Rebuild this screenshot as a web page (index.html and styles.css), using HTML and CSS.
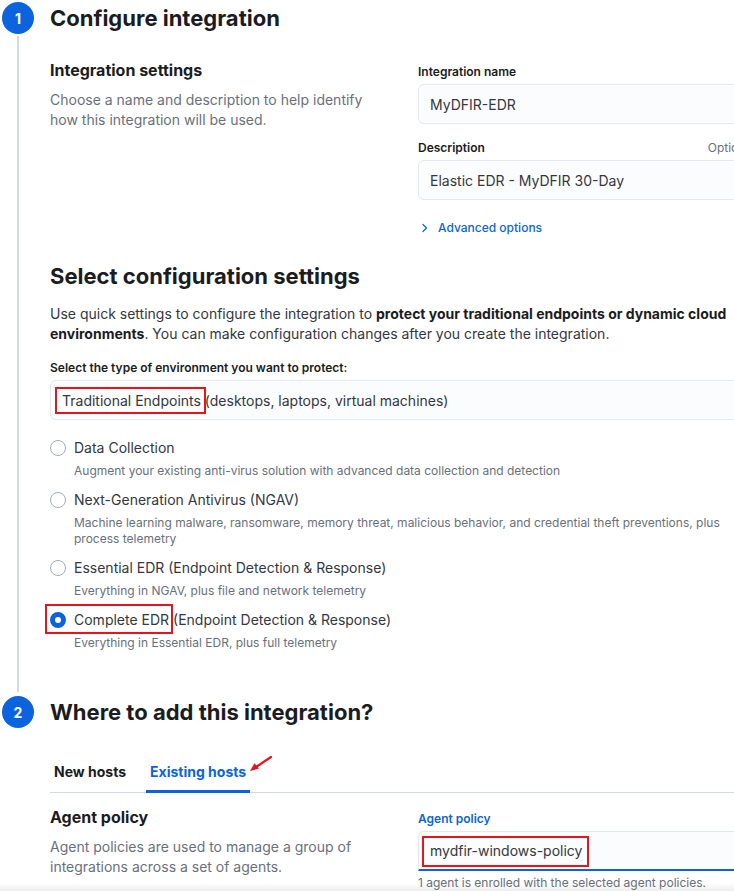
FILE: index.html
```html
<!DOCTYPE html>
<html lang="en">
<head>
<meta charset="utf-8">
<title>Configure integration</title>
<link rel="stylesheet" href="styles.css">
</head>
<body>
<div class="page">
  <section class="step step-one">
    <div class="marker"><span class="num">1</span><span class="line"></span></div>
    <div class="content">
      <h2 class="title">Configure integration</h2>
      <div class="row row-first">
        <div class="row-left">
          <h3 class="row-title">Integration settings</h3>
          <p class="desc">Choose a name and description to help identify how this integration will be used.</p>
        </div>
        <div class="row-right">
          <div class="field">
            <div class="label-row"><span class="label">Integration name</span></div>
            <div class="input">MyDFIR-EDR</div>
          </div>
          <div class="field">
            <div class="label-row"><span class="label">Description</span><span class="opt">Optional</span></div>
            <div class="input">Elastic EDR - MyDFIR 30-Day</div>
          </div>
          <div class="adv">
            <svg class="chev" width="8" height="10" viewBox="0 0 8 10"><path d="M2 1.5 L5.5 5 L2 8.5" fill="none" stroke="currentColor" stroke-width="1.3" stroke-linecap="round" stroke-linejoin="round"/></svg>
            <span>Advanced options</span>
          </div>
        </div>
      </div>

      <h2 class="title config-title">Select configuration settings</h2>
      <p class="intro">Use quick settings to configure the integration to <strong>protect your traditional endpoints or dynamic cloud environments</strong>. You can make configuration changes after you create the integration.</p>
      <div class="env-label">Select the type of environment you want to protect:</div>
      <div class="select"><span class="mark mark-env">Traditional Endpoints</span> (desktops, laptops, virtual machines)</div>

      <div class="radios">
        <div class="radio-item">
          <div class="radio-line"><span class="radio"></span><span>Data Collection</span></div>
          <div class="radio-desc">Augment your existing anti-virus solution with advanced data collection and detection</div>
        </div>
        <div class="radio-item">
          <div class="radio-line"><span class="radio"></span><span>Next-Generation Antivirus (NGAV)</span></div>
          <div class="radio-desc">Machine learning malware, ransomware, memory threat, malicious behavior, and credential theft preventions, plus process telemetry</div>
        </div>
        <div class="radio-item">
          <div class="radio-line"><span class="radio"></span><span>Essential EDR (Endpoint Detection &amp; Response)</span></div>
          <div class="radio-desc">Everything in NGAV, plus file and network telemetry</div>
        </div>
        <div class="radio-item">
          <div class="radio-line"><span class="mark mark-radio"><span class="radio radio-on"></span><span>Complete EDR</span></span><span class="rest">&nbsp;(Endpoint Detection &amp; Response)</span></div>
          <div class="radio-desc">Everything in Essential EDR, plus full telemetry</div>
        </div>
      </div>
    </div>
  </section>

  <section class="step step-two">
    <div class="marker"><span class="num">2</span></div>
    <div class="content">
      <h2 class="title">Where to add this integration?</h2>
      <div class="tabs">
        <div class="tab">New hosts</div>
        <div class="tab tab-active">Existing hosts
          <svg class="arrow" width="26" height="18" viewBox="0 0 26 18"><path d="M23 2 L8 12" stroke="#e8141b" stroke-width="2.2" stroke-linecap="round"/><path d="M2 16 L6.5 8.2 L11 13.6 Z" fill="#e8141b"/></svg>
        </div>
      </div>
      <div class="row row-agent">
        <div class="row-left">
          <h3 class="row-title">Agent policy</h3>
          <p class="desc">Agent policies are used to manage a group of integrations across a set of agents.</p>
        </div>
        <div class="row-right">
          <div class="field">
            <div class="label-row"><span class="label label-focus">Agent policy</span></div>
            <div class="input input-focus"><span class="mark mark-policy">mydfir-windows-policy</span></div>
            <div class="help">1 agent is enrolled with the selected agent policies.</div>
          </div>
        </div>
      </div>
    </div>
  </section>
</div>
<div class="bottom-shade"></div>
</body>
</html>
```

FILE: styles.css
```css
html, body {
  margin: 0;
  padding: 0;
  overflow: hidden;
  background: #ffffff;
}

body {
  font-family: Inter, "Noto Sans", "Liberation Sans", sans-serif;
  color: #343741;
  -webkit-font-smoothing: antialiased;
}

.page {
  width: 755px;
}

.step {
  display: flex;
  gap: 14px;
}

.marker {
  flex: none;
  width: 36px;
  display: flex;
  flex-direction: column;
  align-items: center;
}

.num {
  flex: none;
  width: 32px;
  height: 32px;
  margin-top: 2px;
  border-radius: 50%;
  background: #0b64dd;
  color: #ffffff;
  font-size: 14px;
  font-weight: 700;
  display: flex;
  align-items: center;
  justify-content: center;
}

.line {
  flex: 1;
  width: 2px;
  margin: 2px 0;
  background: #d3dae6;
}

.content {
  width: 705px;
}

.step-one .content {
  padding-bottom: 43px;
}

.title {
  margin: 0;
  font-size: 22px;
  line-height: 36px;
  font-weight: 700;
  color: #1a1c21;
}

.row {
  display: grid;
  grid-template-columns: 340px 337px;
  column-gap: 28px;
}

.row-first {
  margin-top: 22px;
}

.row-title {
  margin: 0;
  font-size: 16px;
  line-height: 24px;
  font-weight: 700;
  color: #1a1c21;
}

.desc {
  margin: 8px 0 0;
  font-size: 14px;
  line-height: 20px;
  color: #69707d;
}

.row-right {
  padding-top: 4px;
}

.field + .field {
  margin-top: 14px;
}

.label-row {
  display: flex;
  justify-content: space-between;
  font-size: 12px;
  line-height: 20px;
}

.label {
  font-weight: 600;
  color: #1a1c21;
}

.label-focus {
  color: #0b64dd;
}

.opt {
  color: #69707d;
}

.input {
  margin-top: 2px;
  height: 40px;
  box-sizing: border-box;
  border: 1px solid #e3e7ee;
  border-radius: 6px;
  background: #fbfcfd;
  padding: 0 11px;
  display: flex;
  align-items: center;
  font-size: 14px;
  color: #343741;
}

.input-focus {
  border-bottom: 2px solid #0b64dd;
  border-radius: 6px 6px 0 0;
}

.help {
  margin-top: 4px;
  font-size: 12px;
  line-height: 16px;
  color: #69707d;
}

.adv {
  margin-top: 18px;
  display: flex;
  align-items: center;
  gap: 9px;
  padding-left: 3px;
  font-size: 12px;
  line-height: 20px;
  font-weight: 500;
  color: #0b64dd;
}

.chev {
  flex: none;
}

.config-title {
  margin-top: 20px;
}

.intro {
  margin: 10px 0 0;
  font-size: 14px;
  line-height: 20px;
  color: #343741;
}

.intro strong {
  font-weight: 700;
  color: #1a1c21;
}

.env-label {
  margin-top: 14px;
  font-size: 12px;
  line-height: 20px;
  font-weight: 600;
  color: #1a1c21;
}

.select {
  margin-top: 2px;
  height: 40px;
  box-sizing: border-box;
  border: 1px solid #e3e7ee;
  border-radius: 6px;
  background: #fbfcfd;
  padding: 0 11px;
  display: flex;
  align-items: center;
  white-space: pre;
  font-size: 14px;
  line-height: 17px;
  color: #343741;
}

.mark {
  position: relative;
}

.mark::after {
  content: "";
  position: absolute;
  border: 2px solid #e8141b;
  pointer-events: none;
}

.mark-env::after {
  left: -7px;
  right: -5px;
  top: -5px;
  bottom: -5px;
}

.mark-radio {
  display: inline-flex;
  align-items: center;
  gap: 8px;
}

.mark-radio::after {
  left: -5px;
  right: -4px;
  top: -6px;
  bottom: -4px;
}

.mark-policy {
  line-height: 17px;
}

.mark-policy::after {
  left: -8px;
  right: -7px;
  top: -6px;
  bottom: -8px;
}

.radios {
  margin-top: 18px;
  display: flex;
  flex-direction: column;
  gap: 11px;
}

.radio-line {
  display: flex;
  align-items: center;
  gap: 8px;
  font-size: 14px;
  line-height: 20px;
  color: #343741;
}

.rest {
  margin-left: -8px;
}

.radio {
  flex: none;
  width: 16px;
  height: 16px;
  box-sizing: border-box;
  border-radius: 50%;
  border: 1px solid #a2abba;
  background: #ffffff;
}

.radio-on {
  border: 5px solid #0b64dd;
  background: #ffffff;
}

.radio-desc {
  margin-top: 5px;
  padding-left: 24px;
  font-size: 12px;
  line-height: 16px;
  color: #69707d;
}

.tabs {
  margin-top: 22px;
  display: flex;
  gap: 16px;
  border-bottom: 1px solid #d3dae6;
}

.tab {
  position: relative;
  height: 40px;
  padding: 0 4px;
  font-size: 14px;
  line-height: 40px;
  font-weight: 700;
  color: #1a1c21;
}

.tab-active {
  color: #0b64dd;
}

.tab-active::after {
  content: "";
  position: absolute;
  left: 0;
  right: 0;
  bottom: -1px;
  height: 3px;
  background: #0b64dd;
}

.arrow {
  position: absolute;
  left: 102px;
  top: 3px;
}

.row-agent {
  margin-top: 12px;
}

.bottom-shade {
  position: fixed;
  left: 0;
  right: 0;
  bottom: 0;
  height: 8px;
  background: linear-gradient(to bottom, rgba(0, 0, 0, 0), rgba(0, 0, 0, 0.07));
}
```
